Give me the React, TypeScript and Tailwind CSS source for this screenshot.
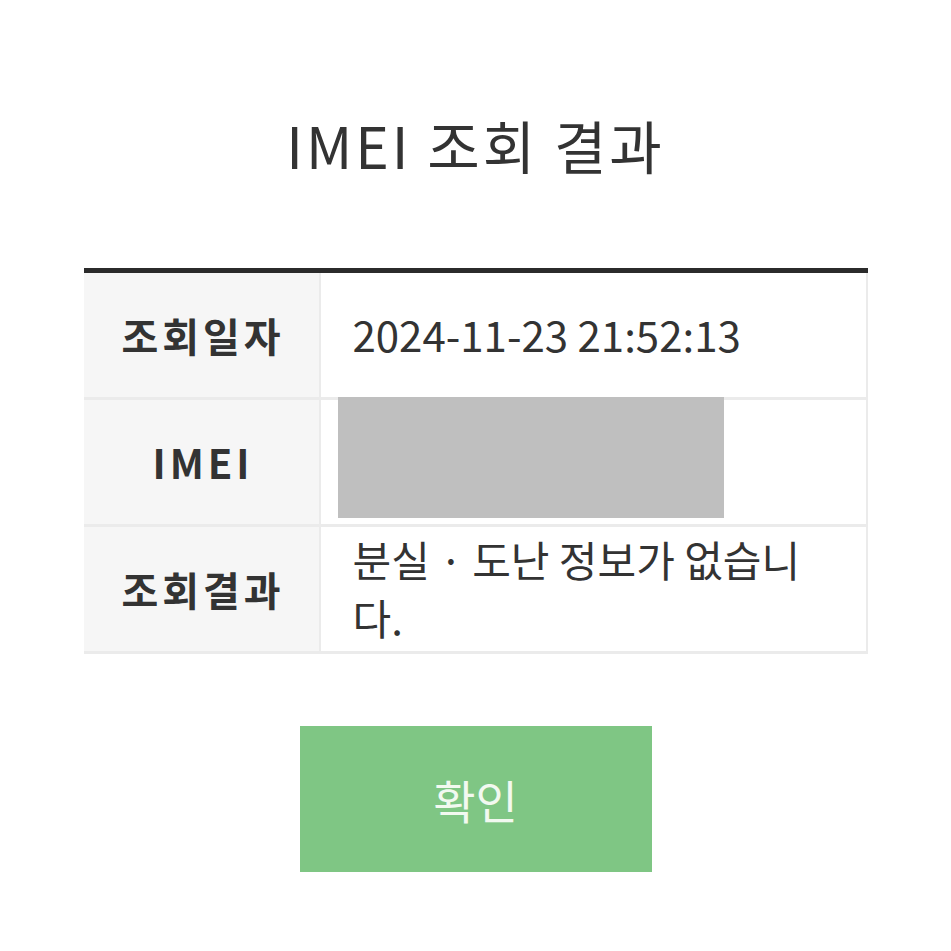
import React from 'react';

const rows = [
  { label: '조회일자', value: '2024-11-23 21:52:13' },
  { label: 'IMEI', value: null },
  { label: '조회결과', value: '분실 · 도난 정보가 없습니다.' },
];

export default function App() {
  return (
    <div
      className="w-[951px] h-[951px] bg-white text-[#333333] flex flex-col items-center"
      style={{ fontFamily: '"Noto Sans CJK KR", "Noto Sans", sans-serif' }}
    >
      <h1 className="mt-[104px] text-[57px] leading-[80px] font-normal tracking-[3px]">IMEI 조회 결과</h1>

      <div className="mt-[84px] w-[784px] border-t-[5px] border-[#2b2b2b]">
        {rows.map((row, i) => (
          <div key={i} className="flex h-[127px] border-b-[3px] border-[#ebebeb]">
            <div className="w-[237px] shrink-0 bg-[#f6f6f6] border-r-[2px] border-[#ebebeb] flex items-center justify-center text-[40px] font-bold tracking-[4px] pl-[4px]">
              {row.label}
            </div>
            <div className="flex-1 bg-white border-r-[2px] border-[#ebebeb] flex items-center pl-[32px]">
              {row.value === null ? (
                <div className="ml-[-15px] w-[386px] h-[121px] bg-[#bfbfbf] -mt-[10px]" />
              ) : (
                <div className="w-[452px] text-[42px] leading-[58px] -mt-[2px]">{row.value}</div>
              )}
            </div>
          </div>
        ))}
      </div>

      <button className="mt-[72px] w-[352px] h-[146px] bg-[#7fc684] text-[#f2f9f0] text-[46px] flex items-center justify-center">
        확인
      </button>
    </div>
  );
}
